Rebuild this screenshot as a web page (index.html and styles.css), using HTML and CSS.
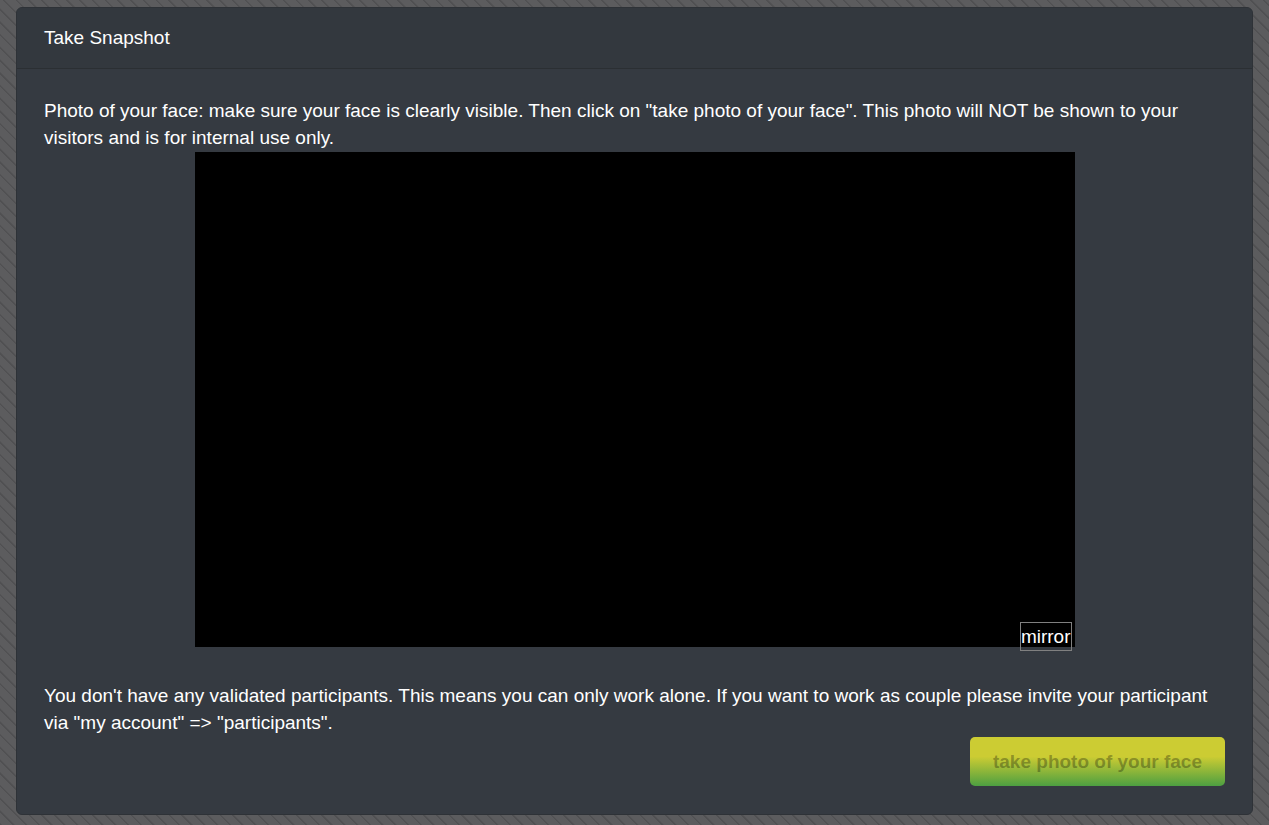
FILE: index.html
```html
<!DOCTYPE html>
<html lang="en">
<head>
<meta charset="utf-8">
<title>Take Snapshot</title>
<link rel="stylesheet" href="styles.css">
</head>
<body>
<main class="card">
  <header class="card-header">Take Snapshot</header>
  <div class="card-body">
    <p class="text">Photo of your face: make sure your face is clearly visible. Then click on "take photo of your face". This photo will NOT be shown to your visitors and is for internal use only.</p>
    <div class="camera">
      <button type="button" class="mirror">mirror</button>
    </div>
    <p class="text">You don't have any validated participants. This means you can only work alone. If you want to work as couple please invite your participant via "my account" =&gt; "participants".</p>
    <div class="actions">
      <button type="button" class="snap" disabled>take photo of your face</button>
    </div>
  </div>
</main>
</body>
</html>
```
FILE: styles.css
```css
* {
  box-sizing: border-box;
}

body {
  margin: 0;
  padding: 7px 16px 10px;
  background-color: #5c5c5e;
  background-image: repeating-linear-gradient(45deg, #505052 0, #505052 1px, #5c5c5e 2px, #5c5c5e 9px);
  color: #fff;
  font: 19px/27px "Liberation Sans", Arial, sans-serif;
}

.card {
  background: #353a41;
  border: 1px solid #2e3237;
  border-radius: 6px;
}

.card-header {
  padding: 16px 27px 17px;
  background: #33383e;
  border-bottom: 1px solid #2b2f33;
  border-radius: 5px 5px 0 0;
}

.card-body {
  padding: 28px 27px;
}

.text {
  margin: 0;
}

.camera {
  position: relative;
  width: 100%;
  max-width: 880px;
  aspect-ratio: 16 / 9;
  margin: 1px auto 35px;
  background: #000;
}

.mirror {
  position: absolute;
  right: 3px;
  bottom: -4px;
  padding: 0;
  border: 1px solid #808080;
  background: transparent;
  color: #fff;
  font: inherit;
}

.actions {
  display: flex;
  justify-content: flex-end;
  padding-top: 1px;
}

.snap {
  padding: 11px 23px;
  border: 0;
  border-radius: 5px;
  background: linear-gradient(#cccc33 40%, #4d9f41);
  color: rgba(0, 0, 0, 0.3);
  font: inherit;
  font-weight: 700;
}
```
